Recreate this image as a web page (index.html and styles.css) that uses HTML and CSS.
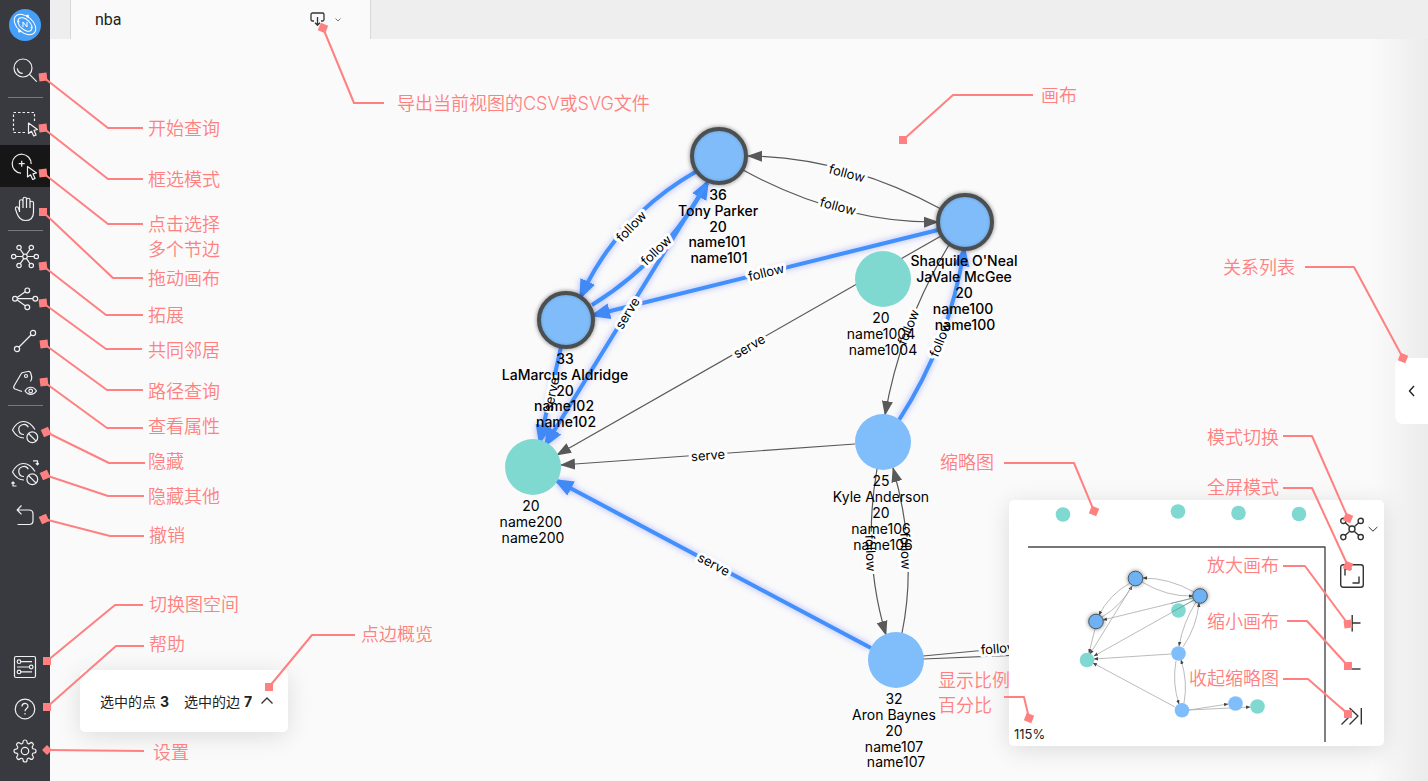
FILE: index.html
```html
<!DOCTYPE html>
<html lang="zh-CN">
<head>
<meta charset="utf-8">
<title>nba</title>
<link rel="stylesheet" href="styles.css">
</head>
<body>
<div class="app">
  <nav class="sidebar">
    <svg class="logo" viewBox="0 0 32 32" aria-hidden="true">
      <circle cx="16" cy="16" r="16" fill="#479ff8"/>
      <g fill="none" stroke="#fff" stroke-width="1">
        <ellipse cx="16" cy="15.500" rx="12.500" ry="8" transform="rotate(42 16 15.500)"/>
        <ellipse cx="16" cy="15.500" rx="8.500" ry="5" transform="rotate(42 16 15.500)"/>
        <path d="M14 18v-5l4 5v-5"/>
      </g>
      <g fill="#fff"><circle cx="18.500" cy="7" r="1.500"/><circle cx="10.500" cy="22" r="1.500"/><circle cx="9.500" cy="12.500" r="1"/><circle cx="22.500" cy="18.500" r="1"/></g>
    </svg>
    <button class="tool" aria-label="开始查询"><svg class="icon" viewBox="0 0 28 28"><circle cx="12" cy="12" r="9"/><path d="M18.300 18.200l7.400 7.500M6.300 12.300c.4 3 2.400 5 5.400 5"/></svg></button>
    <hr class="divider">
    <button class="tool" aria-label="框选模式"><svg class="icon" viewBox="0 0 28 28"><path stroke-dasharray="2.500 2" d="M23.500 11V2.500h-21v20H15"/><path d="M17.500 13v10.500l3-2.200 2.200 4.700 2.400-1.100-2.100-4.600 3.500-.8z"/></svg></button>
    <button class="tool tool-active" aria-label="点击选择"><svg class="icon" viewBox="0 0 28 28"><path d="M20.200 12A9.500 9.500 0 1 0 10 21.200M7.700 11.700h6M10.700 8.700v6"/><path d="M16.500 14.500V25l3-2.200 2.200 4.700 2.400-1.100-2.100-4.600 3.500-.8z"/></svg></button>
    <button class="tool" aria-label="拖动画布"><svg class="icon" viewBox="0 0 28 28"><path d="M8.500 18V7.500a1.700 1.700 0 0 1 3.500 0V14M12 7.500V5a1.700 1.700 0 0 1 3.500 0v9M15.500 6A1.700 1.700 0 0 1 19 6v8M19 9a1.700 1.700 0 0 1 3.500 0v9c0 6-3 8.500-8 8.500s-7-3-8.500-7L4.500 15c-.5-2 1.500-3 2.700-1.500L8.500 17"/></svg></button>
    <hr class="divider divider-close">
    <button class="tool" aria-label="拓展"><svg class="icon" viewBox="0 0 28 28"><path d="M5 13.500h6.500M16.500 13.500H23M9.300 6.300l3.400 5M19 6.300l-3.500 5M9.300 20.600l3.400-5M19 20.600l-3.500-5"/><circle cx="14" cy="13.500" r="2.300"/><circle cx="2.700" cy="13.500" r="2.200"/><circle cx="25.300" cy="13.500" r="2.200"/><circle cx="8" cy="4.500" r="2.200"/><circle cx="20.300" cy="4.500" r="2.200"/><circle cx="8" cy="22.500" r="2.200"/><circle cx="20.300" cy="22.500" r="2.200"/></svg></button>
    <button class="tool" aria-label="共同邻居"><svg class="icon" viewBox="0 0 28 28"><path d="M6.500 13.700H22M6.200 12.500l8-5.700M6.200 15l8 5.700"/><circle cx="4" cy="13.700" r="2.400"/><circle cx="24.300" cy="13.700" r="2.400"/><circle cx="16.300" cy="5.400" r="2.400"/><circle cx="16.300" cy="22.200" r="2.400"/></svg></button>
    <button class="tool" aria-label="路径查询"><svg class="icon" viewBox="0 0 28 28"><path d="M8 20L20 8"/><circle cx="6" cy="22" r="2.600"/><circle cx="22" cy="6" r="2.600"/></svg></button>
    <button class="tool" aria-label="查看属性"><svg class="icon" viewBox="0 0 28 28"><path d="M11 22.500L4 20c-1.200-.5-1.500-1.800-1-3l7-12c.5-1 1-1.300 2-1.500L17 2.500c1.500-.3 2.300.3 2.700 1.500l1 4c.3 2-.2 3-1.200 4.500"/><circle cx="15" cy="7" r="1.500"/><path d="M14 22c3-5 8.500-5 11.500 0-3 4.500-8.500 4.500-11.500 0z"/><circle cx="19.700" cy="22" r="1.800"/></svg></button>
    <hr class="divider divider-close">
    <button class="tool" aria-label="隐藏"><svg class="icon" viewBox="0 0 28 28"><path d="M24 11.500C20.500 6 17 3.500 12.500 3.500S4.500 6 1.500 12c3 5.500 7 8 11.500 8M17.300 9.300A5 5 0 1 0 13 16.500"/><circle cx="21.300" cy="19.300" r="5.400"/><path d="M17.500 15.500l7.600 7.600"/></svg></button>
    <button class="tool" aria-label="隐藏其他"><svg class="icon" viewBox="0 0 28 28"><path d="M24 11.500C20.500 6 17 3.500 12.500 3.500S4.500 6 1.500 12c3 5.500 7 8 11.500 8M17.300 9.300A5 5 0 1 0 13 16.500"/><circle cx="21.300" cy="19.300" r="5.400"/><path d="M17.500 15.500l7.600 7.600M22 .8h4.500v4M24.800 3.200l1.700 1.600 1.500-1.600M5.500 26H2v-4M.500 23.500L2 22l1.500 1.500"/></svg></button>
    <button class="tool" aria-label="撤销"><svg class="icon" viewBox="0 0 28 28"><path d="M10.500 3.500L6.200 8l4.300 4.300M6.500 8H18c2.500 0 4 1.500 4 4v6.500c0 2.500-1.500 4-4 4H6.500"/></svg></button>
    <div class="sidebar-foot">
      <button class="tool" aria-label="切换图空间"><svg class="icon" viewBox="0 0 28 28"><rect x="3.500" y="3.500" width="21" height="21" rx="1.500"/><path d="M10 8.700h11M6 14h12M10 18.900h11"/><circle cx="8" cy="8.700" r="1.800"/><circle cx="20.200" cy="14" r="1.800"/><circle cx="8" cy="18.900" r="1.800"/></svg></button>
      <button class="tool" aria-label="帮助"><svg class="icon" viewBox="0 0 28 28"><circle cx="14" cy="14" r="9.800"/><path d="M11 11.500c0-4 6-4 6-.3 0 2.300-3 2.300-3 5M14 18v1.500"/></svg></button>
      <button class="tool" aria-label="设置"><svg class="icon" viewBox="-2 -2 28 28"><circle cx="12" cy="12" r="3.700"/><path d="M19.400 15a1.650 1.650 0 0 0 .33 1.820l.06.06a2 2 0 0 1-2.830 2.830l-.06-.06a1.650 1.650 0 0 0-2.820 1.180V21a2 2 0 0 1-4 0v-.09A1.650 1.650 0 0 0 9 19.400a1.650 1.650 0 0 0-1.820.33l-.06.06a2 2 0 0 1-2.830-2.830l.06-.06a1.650 1.650 0 0 0-1.180-2.820H3a2 2 0 0 1 0-4h.09A1.650 1.650 0 0 0 4.600 9a1.650 1.650 0 0 0-.33-1.820l-.06-.06a2 2 0 0 1 2.830-2.830l.06.06a1.650 1.650 0 0 0 1.820.33H9a1.650 1.650 0 0 0 1-1.510V3a2 2 0 0 1 4 0v.09a1.650 1.650 0 0 0 2.820 1.180l.06-.06a2 2 0 0 1 2.830 2.830l-.06.06a1.650 1.650 0 0 0-.33 1.820V9a1.650 1.650 0 0 0 1.510 1H21a2 2 0 0 1 0 4h-.09a1.650 1.650 0 0 0-1.510 1z"/></svg></button>
    </div>
  </nav>

  <main class="workspace">
    <header class="tabbar">
      <div class="tab">
        <span class="tab-name">nba</span>
        <button class="export" aria-label="导出">
          <svg width="16" height="16" viewBox="0 0 16 16"><path d="M4 9H2.500C1.500 9 1 8.500 1 7.500V2.500C1 1.500 1.500 1 2.500 1h10c1 0 1.500.5 1.500 1.500v5c0 1-.5 1.500-1.500 1.500H11M7.500 5v8M5 10.700L7.500 13.200 10 10.700"/></svg>
          <svg width="8" height="8" viewBox="0 0 8 8"><path d="M1.500 2.500L4 5l2.500-2.500" stroke="#777" stroke-width="1"/></svg>
        </button>
      </div>
    </header>

    <section class="canvas">
      <svg class="graph">
        <defs>
          <marker id="arrow" markerUnits="userSpaceOnUse" markerWidth="16" markerHeight="12" refX="14" refY="6" orient="auto"><path d="M0 0.500L15 6L0 11.500z" fill="#595959"/></marker>
          <marker id="arrow-on" markerUnits="userSpaceOnUse" markerWidth="22" markerHeight="18" refX="16" refY="9" orient="auto"><path d="M0 1L20 9L0 17z" fill="#4189f5"/></marker>
          <radialGradient id="picked"><stop offset="0.820" stop-color="#7fbcf9"/><stop offset="1" stop-color="#6ba3d9"/></radialGradient>
        </defs>
        <g transform="translate(-50 -39)">
          <g class="edge">
            <path d="M743 170Q840 223 938 222"/>
            <path d="M941 209Q845 157 748 156"/>
            <path d="M941 236L557 455"/>
            <path d="M949 245Q901 324 885 415"/>
            <path d="M855 444L561 465"/>
            <path d="M877 469Q862 555 886 635"/>
            <path d="M902 633Q918 555 893 468"/>
            <path d="M923 656L1198 630"/>
            <path d="M923 659L1198 648"/>
          </g>
          <g class="edge edge-on">
            <path d="M697 171Q618 216 581 296"/>
            <path d="M592 305Q665 260 707 183"/>
            <path d="M707 183L546 444"/>
            <path d="M561 347L540 441"/>
            <path d="M938 230L594 315"/>
            <path d="M899 420Q950 341 964 250"/>
            <path d="M871 648L557 481"/>
          </g>
          <g class="edge-label">
            <text transform="translate(847 173) rotate(15)" y="5">follow</text>
            <text transform="translate(838 206) rotate(15)" y="5">follow</text>
            <text transform="translate(766 272) rotate(-14)" y="5">follow</text>
            <text transform="translate(631 226) rotate(-46)" y="5">follow</text>
            <text transform="translate(656 250) rotate(-44)" y="5">follow</text>
            <text transform="translate(627 313) rotate(-58)" y="5">serve</text>
            <text transform="translate(551 394) rotate(-78)" y="5">serve</text>
            <text transform="translate(749 346) rotate(-30)" y="5">serve</text>
            <text transform="translate(708 455) rotate(-4)" y="5">serve</text>
            <text transform="translate(714 564) rotate(28)" y="5">serve</text>
            <text transform="translate(908 327) rotate(-68)" y="5">follow</text>
            <text transform="translate(940 339) rotate(-68)" y="5">follow</text>
            <text transform="translate(871 553) rotate(88)" y="5">follow</text>
            <text transform="translate(906 551) rotate(88)" y="5">follow</text>
            <text transform="translate(999 648) rotate(-5)" y="5">follow</text>
          </g>
          <g class="node">
            <circle class="node-picked" cx="719" cy="156" r="27"/>
            <circle class="node-picked" cx="965" cy="222" r="27"/>
            <circle class="node-picked" cx="566" cy="320" r="27"/>
            <circle class="node-team" cx="533" cy="467" r="28"/>
            <circle class="node-team" cx="883" cy="279" r="28"/>
            <circle class="node-player" cx="883" cy="442" r="28"/>
            <circle class="node-player" cx="896" cy="660" r="28"/>
          </g>
          <g class="node-label node-label-on">
            <text><tspan x="718" y="200">36</tspan><tspan x="718" dy="16">Tony Parker</tspan><tspan x="718" dy="16">20</tspan><tspan x="717" dy="15">name101</tspan><tspan x="719" dy="16">name101</tspan></text>
            <text><tspan x="964" y="266">Shaquile O'Neal</tspan><tspan x="964" dy="16">JaVale McGee</tspan><tspan x="964" dy="16">20</tspan><tspan x="963" dy="16">name100</tspan><tspan x="965" dy="16">name100</tspan></text>
            <text><tspan x="565" y="364">33</tspan><tspan x="565" dy="16">LaMarcus Aldridge</tspan><tspan x="565" dy="16">20</tspan><tspan x="564" dy="15">name102</tspan><tspan x="566" dy="16">name102</tspan></text>
          </g>
          <g class="node-label">
            <text><tspan x="531" y="511">20</tspan><tspan x="531" dy="16">name200</tspan><tspan x="533" dy="16">name200</tspan></text>
            <text><tspan x="881" y="323">20</tspan><tspan x="881" dy="16">name1004</tspan><tspan x="883" dy="16">name1004</tspan></text>
            <text><tspan x="881" y="486">25</tspan><tspan x="881" dy="16">Kyle Anderson</tspan><tspan x="881" dy="16">20</tspan><tspan x="881" dy="16">name106</tspan><tspan x="883" dy="16">name106</tspan></text>
            <text><tspan x="894" y="704">32</tspan><tspan x="894" dy="16">Aron Baynes</tspan><tspan x="894" dy="16">20</tspan><tspan x="894" dy="16">name107</tspan><tspan x="896" dy="15">name107</tspan></text>
          </g>
        </g>
      </svg>

      <div class="edge-shade"></div>
      <button class="drawer" aria-label="关系列表"><svg width="8" height="14" viewBox="0 0 8 14"><path d="M6 2L1.500 7 6 12"/></svg></button>

      <div class="summary">
        <span>选中的点 <b>3</b></span>
        <span>选中的边 <b>7</b></span>
        <button class="plain" aria-label="展开"><svg width="14" height="10" viewBox="0 0 14 10"><path d="M1.500 7.500L7 2l5.500 5.500"/></svg></button>
      </div>

      <aside class="minimap">
        <div class="minimap-view">
          <svg class="minimap-graph" viewBox="1009 500 317 246">
            <defs><marker id="arrow-sm" markerUnits="userSpaceOnUse" markerWidth="5" markerHeight="4" refX="4" refY="2" orient="auto"><path d="M0 .3L4.500 2L0 3.700z" fill="#444"/></marker></defs>
            <path class="viewport" d="M1028 547h297v195"/>
            <g class="mini-edge">
              <path d="M1142 582Q1167 597 1193 596"/><path d="M1194 592Q1169 578 1143 578"/>
              <path d="M1130 583Q1109 595 1099 615"/><path d="M1102 617Q1122 605 1132 586"/>
              <path d="M1132 586L1090 654"/><path d="M1095 629L1089 653"/>
              <path d="M1193 598L1103 620"/><path d="M1194 600L1094 656"/>
              <path d="M1196 602Q1183 623 1179 646"/><path d="M1183 647Q1197 626 1199 603"/>
              <path d="M1171 654L1094 659"/><path d="M1176 661Q1172 683 1179 704"/>
              <path d="M1184 703Q1188 682 1181 660"/><path d="M1175 707L1093 663"/>
              <path d="M1189 710L1228 704"/><path d="M1189 710L1250 707"/>
            </g>
            <g class="node-team"><circle cx="1063" cy="514.500" r="7.300"/><circle cx="1178" cy="511.500" r="7.300"/><circle cx="1238.500" cy="513" r="7.300"/><circle cx="1299" cy="514" r="7.300"/><circle cx="1178.500" cy="610.500" r="7.300"/><circle cx="1087" cy="660" r="7.300"/><circle cx="1257.500" cy="706.500" r="7.300"/></g>
            <g class="node-player"><circle cx="1178.500" cy="653.500" r="7.300"/><circle cx="1182" cy="710.300" r="7.300"/><circle cx="1235.500" cy="703.500" r="7.300"/></g>
            <g class="mini-picked"><circle cx="1135.500" cy="578.500" r="7.300"/><circle cx="1200" cy="596" r="7.300"/><circle cx="1096" cy="621.500" r="7.300"/></g>
            <path class="mini-over" d="M1194 600L1172 612M1193 598L1171 603.500"/>
          </svg>
          <span class="scale">115%</span>
        </div>
        <div class="controls">
          <button class="plain mode" aria-label="模式切换">
            <svg width="24" height="24" viewBox="0 0 24 24"><path d="M5 5.500l4.500 4M19 5.500l-4.500 4M5 18.500l4.500-4M19 18.500l-4.500-4"/><circle cx="12" cy="12" r="3"/><circle cx="3.300" cy="3.900" r="2.600"/><circle cx="20.700" cy="3.900" r="2.600"/><circle cx="3.300" cy="20.100" r="2.600"/><circle cx="20.700" cy="20.100" r="2.600"/></svg>
            <svg width="10" height="10" viewBox="0 0 10 10"><path class="thin" d="M.7 3L5 7.200 9.300 3"/></svg>
          </button>
          <button class="plain" aria-label="全屏模式"><svg width="24" height="24" viewBox="0 0 24 24"><rect x=".7" y=".7" width="22.600" height="22.600" rx="2.500"/><path d="M5 11.500V5h6.500M19 12.500V19h-6.500"/></svg></button>
          <button class="plain" aria-label="放大画布"><svg width="24" height="24" viewBox="0 0 24 24"><path d="M4 12h16.500M12.200 4v16.500"/></svg></button>
          <button class="plain" aria-label="缩小画布"><svg width="24" height="24" viewBox="0 0 24 24"><path d="M4 11h16.500"/></svg></button>
          <button class="plain" aria-label="收起缩略图"><svg width="24" height="24" viewBox="0 0 24 24"><path d="M1.500 3l8.500 8-8.500 8.500M9.500 3l8.500 8-8.500 8.500M21.300 3v16.500"/></svg></button>
        </div>
      </aside>
    </section>
  </main>

  <svg class="notes">
    <defs>
      <marker id="pin-flat" markerUnits="userSpaceOnUse" markerWidth="14" markerHeight="14" refX="7" refY="7" orient="0"><path d="M3 3h8v8H3z" fill="#ff8080"/></marker>
      <marker id="pin" markerUnits="userSpaceOnUse" markerWidth="14" markerHeight="14" refX="7" refY="7" orient="-7"><path d="M3 3h8v8H3z" fill="#ff8080"/></marker>
      <marker id="pin-lean" markerUnits="userSpaceOnUse" markerWidth="14" markerHeight="14" refX="7" refY="7" orient="-25"><path d="M3 3h8v8H3z" fill="#ff8080"/></marker>
      <marker id="pin-tilt" markerUnits="userSpaceOnUse" markerWidth="14" markerHeight="14" refX="7" refY="7" orient="22"><path d="M3 3h8v8H3z" fill="#ff8080"/></marker>
      <marker id="pin-diamond" markerUnits="userSpaceOnUse" markerWidth="14" markerHeight="14" refX="7" refY="7" orient="45"><path d="M3.500 3.500h7v7h-7z" fill="#ff8080"/></marker>
    </defs>
    <g class="lead">
      <path d="M43 77L108 128h35"/><path d="M43 128L108 179h35"/><path d="M43 173L108 224h35"/>
      <path d="M43 266L106 315h37"/><path d="M43 303L106 349h36"/><path d="M44 344L107 390h36"/><path d="M44 382L107 428h36"/>
      <path d="M1348 624L1305 566h-22"/>
    </g>
    <g class="lead lead-flat">
      <path d="M43 212L113 278h30"/><path d="M47 661L115 605h28"/><path d="M47 707L116 646h28"/><path d="M269 687L312 635h43"/>
      <path d="M903 140L953 95h80"/><path d="M1348 666L1307 621h-20"/><path d="M1348 714L1308 679h-25"/>
    </g>
    <g class="lead lead-lean"><path d="M46 432L109 463h36"/><path d="M45 475L108 496h36"/><path d="M44 519L110 536h34"/></g>
    <g class="lead lead-tilt">
      <path d="M323 28L354 103h30"/><path d="M1094 511L1074 463h-70"/><path d="M1403 358L1354 267h-49"/>
      <path d="M1348 518L1312 436h-29"/><path d="M1348 566L1312 488h-29"/><path d="M1029 718L1024 697h-20"/>
    </g>
    <g class="lead lead-diamond"><path d="M47 750L144 751"/></g>
    <g class="note">
      <text x="148" y="135">开始查询</text><text x="148" y="186">框选模式</text>
      <text x="148" y="231">点击选择<tspan x="148" dy="25">多个节边</tspan></text>
      <text x="148" y="285">拖动画布</text><text x="148" y="322">拓展</text><text x="148" y="357">共同邻居</text>
      <text x="148" y="398">路径查询</text><text x="148" y="433">查看属性</text><text x="148" y="468">隐藏</text>
      <text x="148" y="503">隐藏其他</text><text x="149" y="542">撤销</text><text x="149" y="611">切换图空间</text>
      <text x="149" y="651">帮助</text><text x="153" y="759">设置</text><text x="361" y="641">点边概览</text>
      <text x="397" y="110">导出当前视图的CSV或SVG文件</text><text x="1041" y="102">画布</text><text x="1223" y="274">关系列表</text>
      <text x="1207" y="444">模式切换</text><text x="1207" y="494">全屏模式</text><text x="1207" y="572">放大画布</text>
      <text x="1207" y="628">缩小画布</text><text x="1189" y="685">收起缩略图</text><text x="940" y="469">缩略图</text>
      <text x="938" y="687">显示比例<tspan x="938" dy="25">百分比</tspan></text>
    </g>
  </svg>
</div>
</body>
</html>
```

FILE: styles.css
```css
* { box-sizing: border-box; }
body {
  margin: 0;
  background: #fafafa;
  color: #222;
  font-family: Inter, "Noto Sans CJK SC", sans-serif;
  font-size: 14px;
}
button {
  margin: 0;
  padding: 0;
  border: 0;
  background: none;
  color: inherit;
  cursor: pointer;
}
svg { display: block; fill: none; stroke-linejoin: round; }

.app { position: relative; display: flex; height: 100vh; overflow: hidden; }

.sidebar {
  flex: none;
  display: flex;
  flex-direction: column;
  width: 50px;
  padding: 9px 0;
  background: #393a40;
}
.logo { width: 32px; height: 32px; margin: 0 9px 8px; flex: none; }
.tool {
  flex: none;
  display: flex;
  align-items: center;
  justify-content: center;
  width: 100%;
  height: 42px;
}
.tool-active { background: #161617; }
.icon { width: 28px; height: 28px; stroke: #f0f0f0; stroke-width: 1.2; }
.divider {
  flex: none;
  width: 35px;
  height: 1px;
  margin: 6px 8px 5px;
  border: 0;
  background: #77787c;
}
.divider-close { margin-top: 1px; }
.sidebar-foot { margin-top: auto; }

.workspace { flex: 1; display: flex; flex-direction: column; min-width: 0; }
.tabbar { flex: none; display: flex; height: 39px; padding-left: 20px; background: #eee; }
.tab {
  display: flex;
  align-items: center;
  justify-content: space-between;
  width: 301px;
  padding: 0 28px 0 24px;
  border: solid #d8d8d8;
  border-width: 0 1px;
  background: #fafafa;
}
.tab-name { font-family: Roboto, sans-serif; font-size: 16px; }
.export { display: flex; align-items: center; gap: 8px; stroke: #333; stroke-width: 1.3; }

.canvas { position: relative; flex: 1; min-height: 0; }
.graph { position: absolute; inset: 0; width: 100%; height: 100%; }
.edge path { stroke: #595959; stroke-width: 1.2; marker-end: url(#arrow); }
.edge-on { filter: drop-shadow(0 0 3px rgba(80, 100, 255, .5)); }
.edge-on path { stroke: #4190fb; stroke-width: 4; marker-end: url(#arrow-on); }
.edge-label {
  fill: #000;
  stroke: #fff;
  stroke-width: 6px;
  paint-order: stroke;
  font-size: 13px;
  text-anchor: middle;
}
.node-team { fill: #80d9d1; }
.node-player { fill: #80bdfb; }
.node-picked {
  fill: url(#picked);
  stroke: #4b4f52;
  stroke-width: 4;
  filter: drop-shadow(0 0 2px rgba(0, 0, 0, .5));
}
.node-label { fill: #000; font-size: 14px; text-anchor: middle; }
.node-label-on { font-weight: 500; }

.edge-shade {
  position: absolute;
  inset: 0 0 0 auto;
  width: 56px;
  background: linear-gradient(to right, rgba(0, 0, 0, 0), rgba(0, 0, 0, .06));
}
.drawer {
  position: absolute;
  top: 319px;
  right: 0;
  display: flex;
  align-items: center;
  justify-content: center;
  width: 33px;
  height: 66px;
  border-radius: 8px 0 0 8px;
  background: #fff;
  stroke: #222;
  stroke-width: 1.4;
}
.plain { display: flex; align-items: center; stroke: #333; stroke-width: 1.4; }
.summary, .minimap {
  position: absolute;
  background: #fff;
  border-radius: 5px;
  box-shadow: 0 4px 24px rgba(0, 0, 0, .12);
}
.summary {
  left: 30px;
  bottom: 49px;
  display: flex;
  align-items: center;
  height: 62px;
  padding: 0 14px 0 20px;
  gap: 15px;
}
.summary .plain { margin-left: -7px; }

.minimap { right: 44px; bottom: 35px; display: flex; }
.minimap-view { position: relative; }
.minimap-graph { width: 317px; height: 246px; }
.viewport { stroke: #4a4a4a; stroke-width: 1.4; }
.mini-edge path { stroke: #aaa; stroke-width: .8; marker-end: url(#arrow-sm); }
.mini-over { stroke: #4f8f8a; stroke-width: .6; }
.mini-picked {
  fill: #6fb2f3;
  stroke: #4b5966;
  stroke-width: 1;
  filter: drop-shadow(0 0 2px rgba(0, 0, 0, .5));
}
.scale { position: absolute; left: 5px; bottom: 4px; font-size: 13px; line-height: 16px; }
.controls {
  display: flex;
  flex-direction: column;
  gap: 23px;
  width: 58px;
  padding: 17px 6px 0 14px;
}
.mode { gap: 4px; }
.thin { stroke-width: 1; }

.notes { position: absolute; inset: 0; width: 100%; height: 100%; pointer-events: none; }
.lead path { stroke: #ff8080; stroke-width: 2; marker-start: url(#pin); }
.lead-flat path { marker-start: url(#pin-flat); }
.lead-lean path { marker-start: url(#pin-lean); }
.lead-tilt path { marker-start: url(#pin-tilt); }
.lead-diamond path { marker-start: url(#pin-diamond); }
.note {
  fill: #ff8080;
  font-family: Inter, "Noto Sans CJK SC", sans-serif;
  font-size: 18px;
  font-weight: 350;
}
```
